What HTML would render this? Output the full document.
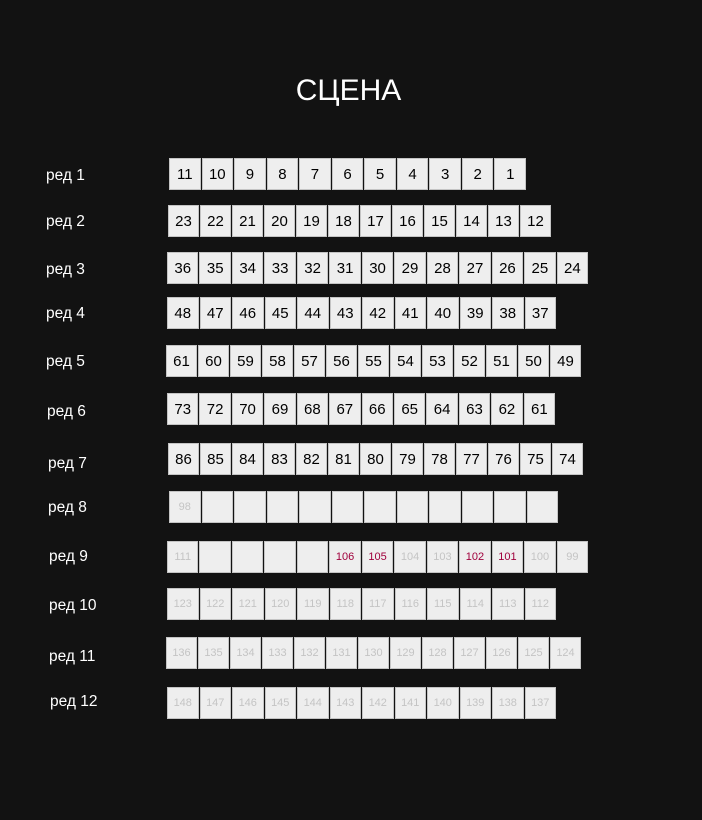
<!DOCTYPE html>
<html><head><meta charset="utf-8"><style>
body{margin:0;width:702px;height:820px;background:#121212;position:relative;overflow:hidden;font-family:"Liberation Sans",sans-serif}
.t{position:absolute;left:0;width:697px;top:71px;text-align:center;color:#fff;font-size:30px;line-height:40px}
.l{position:absolute;color:#fff;font-size:15.5px;line-height:18px;margin-top:1px}
.r{position:absolute;display:flex;height:32px}
.r span{flex:1;margin-right:1px;background:#eee;border:1px solid #c4c4c4;box-sizing:border-box;display:flex;align-items:center;justify-content:center;font-size:15px;color:#000}
.f span{font-size:11px;color:#c4c4c4}
.f span.p{color:#a0003c}
</style></head><body>
<div class="t">СЦЕНА</div>
<div class="l" style="left:46px;top:166px">ред 1</div>
<div class="r" style="left:169px;top:158px;width:358px"><span>11</span><span>10</span><span>9</span><span>8</span><span>7</span><span>6</span><span>5</span><span>4</span><span>3</span><span>2</span><span>1</span></div>
<div class="l" style="left:46px;top:212px">ред 2</div>
<div class="r" style="left:168px;top:205px;width:384px"><span>23</span><span>22</span><span>21</span><span>20</span><span>19</span><span>18</span><span>17</span><span>16</span><span>15</span><span>14</span><span>13</span><span>12</span></div>
<div class="l" style="left:46px;top:260px">ред 3</div>
<div class="r" style="left:167px;top:252px;width:422px"><span>36</span><span>35</span><span>34</span><span>33</span><span>32</span><span>31</span><span>30</span><span>29</span><span>28</span><span>27</span><span>26</span><span>25</span><span>24</span></div>
<div class="l" style="left:46px;top:304px">ред 4</div>
<div class="r" style="left:167px;top:297px;width:390px"><span>48</span><span>47</span><span>46</span><span>45</span><span>44</span><span>43</span><span>42</span><span>41</span><span>40</span><span>39</span><span>38</span><span>37</span></div>
<div class="l" style="left:46px;top:352px">ред 5</div>
<div class="r" style="left:166px;top:345px;width:416px"><span>61</span><span>60</span><span>59</span><span>58</span><span>57</span><span>56</span><span>55</span><span>54</span><span>53</span><span>52</span><span>51</span><span>50</span><span>49</span></div>
<div class="l" style="left:47px;top:402px">ред 6</div>
<div class="r" style="left:167px;top:393px;width:389px"><span>73</span><span>72</span><span>70</span><span>69</span><span>68</span><span>67</span><span>66</span><span>65</span><span>64</span><span>63</span><span>62</span><span>61</span></div>
<div class="l" style="left:48px;top:454px">ред 7</div>
<div class="r" style="left:168px;top:443px;width:416px"><span>86</span><span>85</span><span>84</span><span>83</span><span>82</span><span>81</span><span>80</span><span>79</span><span>78</span><span>77</span><span>76</span><span>75</span><span>74</span></div>
<div class="l" style="left:48px;top:498px">ред 8</div>
<div class="r f" style="left:169px;top:491px;width:390px"><span>98</span><span></span><span></span><span></span><span></span><span></span><span></span><span></span><span></span><span></span><span></span><span></span></div>
<div class="l" style="left:49px;top:547px">ред 9</div>
<div class="r f" style="left:167px;top:541px;width:422px"><span>111</span><span></span><span></span><span></span><span></span><span class="p">106</span><span class="p">105</span><span>104</span><span>103</span><span class="p">102</span><span class="p">101</span><span>100</span><span>99</span></div>
<div class="l" style="left:49px;top:596px">ред 10</div>
<div class="r f" style="left:167px;top:588px;width:390px"><span>123</span><span>122</span><span>121</span><span>120</span><span>119</span><span>118</span><span>117</span><span>116</span><span>115</span><span>114</span><span>113</span><span>112</span></div>
<div class="l" style="left:49px;top:647px">ред 11</div>
<div class="r f" style="left:166px;top:637px;width:416px"><span>136</span><span>135</span><span>134</span><span>133</span><span>132</span><span>131</span><span>130</span><span>129</span><span>128</span><span>127</span><span>126</span><span>125</span><span>124</span></div>
<div class="l" style="left:50px;top:692px">ред 12</div>
<div class="r f" style="left:167px;top:687px;width:390px"><span>148</span><span>147</span><span>146</span><span>145</span><span>144</span><span>143</span><span>142</span><span>141</span><span>140</span><span>139</span><span>138</span><span>137</span></div>
</body></html>
